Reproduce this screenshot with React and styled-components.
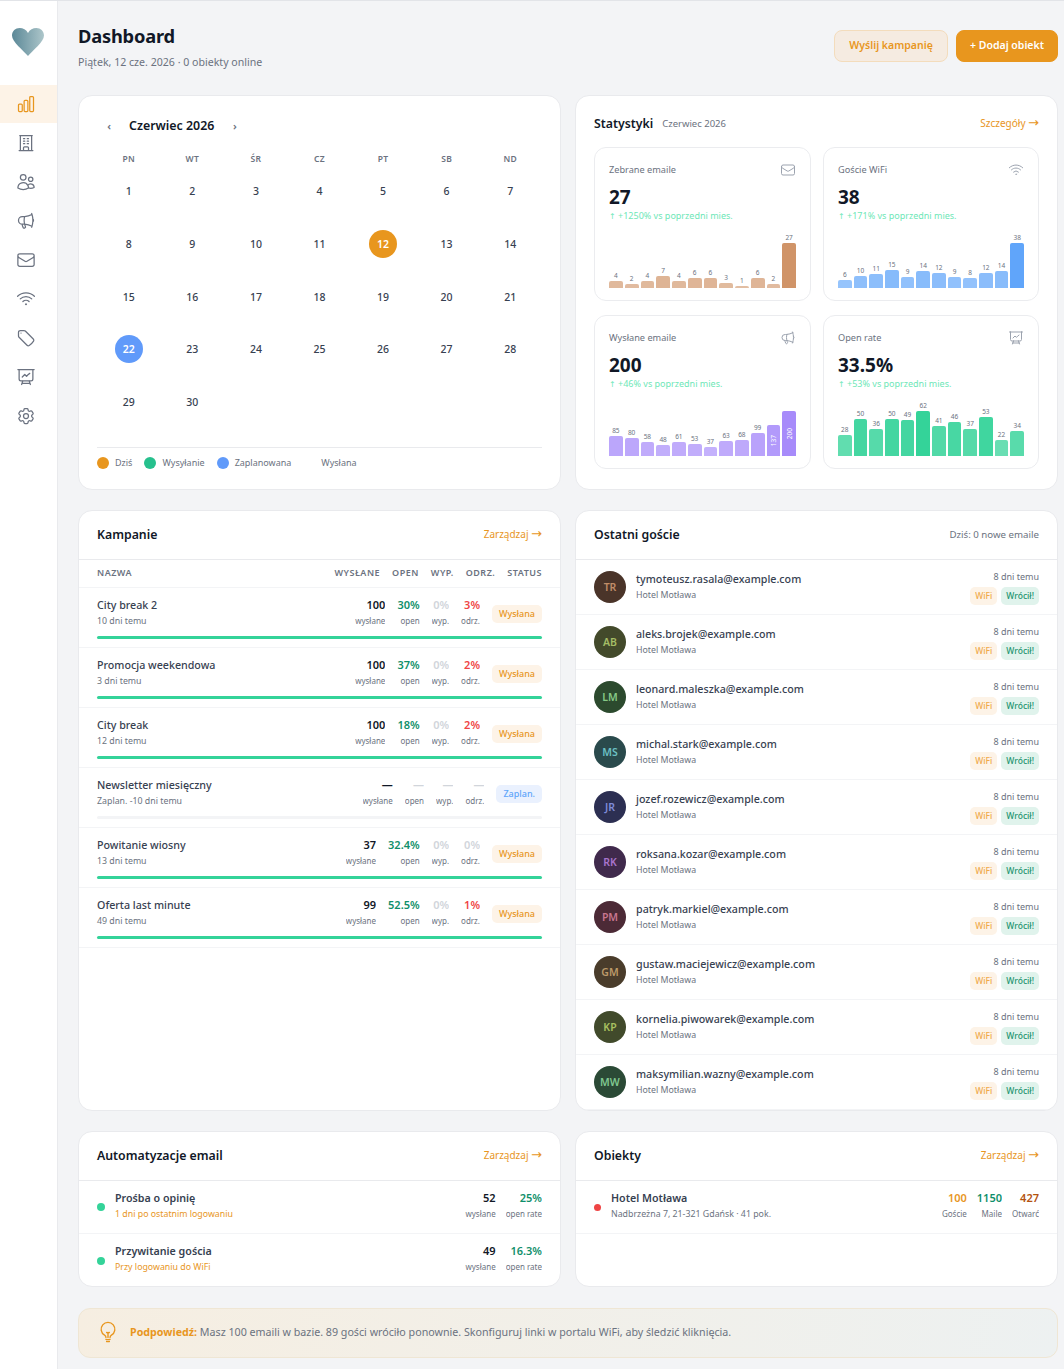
import React from "react";
import styled, { createGlobalStyle } from "styled-components";
import {
  HiOutlineChartBar,
  HiOutlineBuildingOffice,
  HiOutlineUsers,
  HiOutlineMegaphone,
  HiOutlineEnvelope,
  HiOutlineWifi,
  HiOutlineTag,
  HiOutlinePresentationChartLine,
  HiOutlineCog6Tooth,
  HiOutlineLightBulb,
} from "react-icons/hi2";

const ORANGE = "#e8961e";
const FONT = `"Noto Sans", "Open Sans", Arial, sans-serif`;

const GlobalStyle = createGlobalStyle`
  * { box-sizing: border-box; }
  html, body { margin: 0; padding: 0; }
  body {
    background: #f3f4f6;
    font-family: ${FONT};
    color: #111827;
  }
`;

const Page = styled.div`
  display: flex;
  width: 1064px;
  height: 1369px;
  overflow: hidden;
  border-top: 1px solid #e2e4e8;
`;

const Sidebar = styled.aside`
  width: 58px;
  flex-shrink: 0;
  background: #fff;
  border-right: 1px solid #e9eaed;
  padding-top: 26px;
`;

const Logo = styled.div`
  display: flex;
  padding-left: 11px;
  height: 58px;
`;

const NavItem = styled.div`
  height: 38px;
  margin-bottom: 1px;
  display: flex;
  align-items: center;
  padding-left: 16px;
  font-size: 20px;
  color: ${(p) => (p.$active ? ORANGE : "#6b7280")};
  background: ${(p) => (p.$active ? "#fdf3e7" : "transparent")};
`;

const Main = styled.main`
  flex: 1;
  padding: 0 6px 0 20px;
  min-width: 0;
`;

const TopBar = styled.header`
  display: flex;
  justify-content: space-between;
  align-items: flex-start;
  height: 94px;
  padding-top: 22px;
`;

const Title = styled.h1`
  margin: 0;
  font-size: 18.3px;
  line-height: 26px;
  font-weight: 700;
  letter-spacing: -0.2px;
`;

const Subtitle = styled.div`
  font-size: 10.6px;
  line-height: 14px;
  margin-top: 6px;
  color: #6b7280;
`;

const Actions = styled.div`
  display: flex;
  gap: 8px;
  padding-top: 7px;
`;

const Button = styled.button`
  height: 32px;
  width: ${(p) => p.$w}px;
  border-radius: 8px;
  font-family: ${FONT};
  font-size: 10.5px;
  font-weight: 600;
  padding: 0 0 2px;
  color: ${(p) => (p.$primary ? "#fff" : ORANGE)};
  background: ${(p) => (p.$primary ? ORANGE : "#f5ebe1")};
  border: 1px solid ${(p) => (p.$primary ? ORANGE : "#f3dcbc")};
`;

const Columns = styled.div`
  display: grid;
  grid-template-columns: 483px 483px;
  gap: 14px;
  margin-bottom: ${(p) => p.$mb || 20}px;
  height: ${(p) => p.$h}px;
`;

const Card = styled.section`
  background: #fff;
  border: 1px solid #e9eaed;
  border-radius: 14px;
  overflow: hidden;
  min-width: 0;
`;

const CalendarCard = styled(Card)`
  padding: 17px 18px 0;
`;

const CalHead = styled.div`
  display: flex;
  align-items: center;
  height: 24px;
  font-size: 12.4px;
  font-weight: 600;
  margin-bottom: 16px;
`;

const CalArrow = styled.span`
  font-size: 11px;
  color: #6b7280;
  width: ${(p) => p.$w}px;
  margin-right: ${(p) => p.$mr || 0}px;
  text-align: ${(p) => p.$align};
`;

const CalMonth = styled.span`
  width: 104px;
  white-space: nowrap;
`;

const CalGrid = styled.div`
  display: grid;
  grid-template-columns: repeat(7, 1fr);
  text-align: center;
`;

const DayName = styled.div`
  font-size: 8.5px;
  font-weight: 600;
  line-height: 12px;
  height: 11.7px;
  letter-spacing: 0.3px;
  color: #6b7280;
`;

const DayCell = styled.div`
  height: 52.75px;
  display: flex;
  justify-content: center;
  align-items: center;
  font-size: 10.5px;
  font-weight: 500;
  color: #374151;
`;

const DayCircle = styled.span`
  width: 28px;
  height: 28px;
  border-radius: 50%;
  display: flex;
  align-items: center;
  justify-content: center;
  font-weight: ${(p) => (p.$bg ? 600 : 500)};
  color: ${(p) => (p.$bg ? "#fff" : "inherit")};
  background: ${(p) => p.$bg || "transparent"};
`;

const Legend = styled.div`
  display: flex;
  align-items: center;
  gap: 12px;
  margin-top: 18.3px;
  padding-top: 9px;
  border-top: 1px solid #e9eaed;
`;

const LegendItem = styled.div`
  display: flex;
  align-items: center;
  gap: 6px;
  font-size: 9px;
  line-height: 12px;
  color: #6b7280;
`;

const LegendDot = styled.span`
  width: 12px;
  height: 12px;
  border-radius: 50%;
  background: ${(p) => p.$c};
`;

const StatsCard = styled(Card)`
  padding: 16px 18px 0;
`;

const StatsHead = styled.div`
  display: flex;
  align-items: center;
  height: 22px;
  margin-bottom: 13px;
`;

const CardTitle = styled.h2`
  margin: 0;
  font-size: 12.3px;
  font-weight: 600;
  white-space: nowrap;
`;

const Muted = styled.span`
  font-size: ${(p) => p.$size || 9.5}px;
  color: #6b7280;
  margin-left: ${(p) => (p.$right ? "auto" : `${p.$ml || 0}px`)};
  white-space: nowrap;
`;

const LinkText = styled.span`
  font-size: 10px;
  color: ${ORANGE};
  margin-left: auto;
  white-space: nowrap;
`;

const Arrow = styled.span`
  font-family: "DejaVu Sans", sans-serif;
  font-size: ${(p) => p.$size}px;
  line-height: 0;
`;

const StatGrid = styled.div`
  display: grid;
  grid-template-columns: 217px 216px;
  gap: 14px 12px;
`;

const StatBox = styled.div`
  height: 154px;
  border: 1px solid #ebecef;
  border-radius: 12px;
  padding: 14px 14px 12px;
  display: flex;
  flex-direction: column;
`;

const StatTop = styled.div`
  display: flex;
  justify-content: space-between;
  align-items: center;
  font-size: 9.2px;
  line-height: 14px;
  color: #6b7280;
  svg { font-size: 16px; color: #9ca3af; }
`;

const StatValue = styled.div`
  font-size: 19px;
  line-height: 24px;
  font-weight: 700;
  margin-top: 7px;
`;

const StatDelta = styled.div`
  font-size: 9px;
  line-height: 12px;
  margin-top: 1px;
  color: #6ee7b7;
  white-space: nowrap;
`;

const Bars = styled.div`
  margin-top: auto;
  display: flex;
  align-items: flex-end;
  gap: 2px;
`;

const BarCol = styled.div`
  flex: 1 1 0;
  min-width: 0;
  display: flex;
  flex-direction: column;
  align-items: center;
`;

const BarLabel = styled.span`
  font-size: 6.5px;
  line-height: 8px;
  margin-bottom: 1px;
  color: #6b7280;
`;

const Bar = styled.div`
  width: 100%;
  border-radius: 2px 2px 0 0;
  background: ${(p) => p.$c};
  display: flex;
  align-items: center;
  justify-content: center;
`;

const BarInner = styled.span`
  writing-mode: vertical-rl;
  transform: rotate(180deg);
  font-size: 6.5px;
  color: #fff;
`;

const PanelHead = styled.div`
  height: 49px;
  display: flex;
  align-items: center;
  padding: 0 18px 2px;
  border-bottom: 1px solid #e9eaed;
`;

const TableHead = styled.div`
  height: 28px;
  display: flex;
  align-items: center;
  padding: 0 18px 2px;
  font-size: 9px;
  font-weight: 600;
  letter-spacing: 0.5px;
  color: #6b7280;
  border-bottom: 1px solid #f3f4f6;
`;

const HeadCell = styled.span`
  margin-left: ${(p) => p.$ml || 0}px;
  margin-right: ${(p) => (p.$grow ? "auto" : 0)};
`;

const CampaignRow = styled.div`
  height: 60px;
  padding: 7px 18px 0;
  border-bottom: 1px solid #f3f4f6;
`;

const RowTop = styled.div`
  display: flex;
  align-items: center;
  height: 33px;
`;

const NameBlock = styled.div`
  flex: 1;
  min-width: 0;
`;

const GuestInfo = styled(NameBlock)`
  margin-top: -3px;
`;

const RowName = styled.div`
  font-size: 10.7px;
  line-height: 16px;
  font-weight: ${(p) => p.$weight || 500};
  color: #374151;
  white-space: nowrap;
`;

const RowSub = styled.div`
  font-size: 8.8px;
  line-height: 12px;
  margin-top: 2px;
  color: ${(p) => p.$c || "#6b7280"};
  white-space: nowrap;
`;

const Metric = styled.div`
  text-align: right;
  margin-left: ${(p) => p.$ml ?? 12}px;
  width: ${(p) => (p.$w ? `${p.$w}px` : "auto")};
  overflow: hidden;
`;

const MetricValue = styled.div`
  font-size: 11px;
  line-height: 16px;
  font-weight: 600;
  color: ${(p) => p.$c || "#111827"};
`;

const MetricLabel = styled.div`
  font-size: 8px;
  line-height: 12px;
  margin-top: 2px;
  color: #6b7280;
  white-space: nowrap;
`;

const Pill = styled.span`
  display: inline-flex;
  align-items: center;
  justify-content: center;
  height: 18px;
  padding: 0 ${(p) => (p.$small ? 5 : 7)}px;
  border-radius: 5px;
  font-size: ${(p) => (p.$small ? 8.5 : 9)}px;
  font-weight: 500;
  white-space: nowrap;
  color: ${(p) => p.$c};
  background: ${(p) => p.$bg};
  margin-left: ${(p) => p.$ml || 0}px;
  margin-top: ${(p) => (p.$small ? 0 : 4)}px;
`;

const Progress = styled.div`
  height: 3px;
  margin-top: 8px;
  border-radius: 2px;
  background: ${(p) => (p.$on ? "#34d399" : "#f3f4f6")};
`;

const GuestRow = styled.div`
  height: 55px;
  display: flex;
  align-items: center;
  padding: 0 18px;
  border-bottom: 1px solid #f3f4f6;
`;

const Avatar = styled.div`
  width: 32px;
  height: 32px;
  border-radius: 50%;
  flex-shrink: 0;
  display: flex;
  align-items: center;
  justify-content: center;
  margin-right: 10px;
  padding-bottom: 1px;
  font-size: 10.5px;
  font-weight: 600;
  background: ${(p) => p.$bg};
  color: ${(p) => p.$c};
`;

const GuestSide = styled.div`
  display: flex;
  flex-direction: column;
  align-items: flex-end;
  gap: 3px;
`;

const GuestTime = styled.div`
  font-size: 9px;
  line-height: 14px;
  color: #6b7280;
`;

const GuestPills = styled.div`
  display: flex;
  gap: 4px;
`;

const ListRow = styled.div`
  height: 53px;
  display: flex;
  align-items: center;
  padding: 0 18px 5px;
  border-bottom: ${(p) => (p.$last ? "none" : "1px solid #f3f4f6")};
`;

const StatusDot = styled.span`
  width: ${(p) => p.$s}px;
  height: ${(p) => p.$s}px;
  border-radius: 50%;
  flex-shrink: 0;
  margin: 5px 10px 0 0;
  background: ${(p) => p.$c};
`;

const Tip = styled.div`
  height: 50px;
  display: flex;
  align-items: center;
  padding: 0 18px 2px;
  gap: 11px;
  border: 1px solid #efe6d4;
  border-radius: 12px;
  background: linear-gradient(100deg, #f6eee1, #edf1f1);
  font-size: 10.7px;
  color: #6b7280;
  white-space: nowrap;
  svg { font-size: 22px; color: ${ORANGE}; flex-shrink: 0; }
  b { color: ${ORANGE}; font-weight: 700; }
`;

const navIcons = [
  HiOutlineChartBar,
  HiOutlineBuildingOffice,
  HiOutlineUsers,
  HiOutlineMegaphone,
  HiOutlineEnvelope,
  HiOutlineWifi,
  HiOutlineTag,
  HiOutlinePresentationChartLine,
  HiOutlineCog6Tooth,
];

const dayNames = ["PN", "WT", "ŚR", "CZ", "PT", "SB", "ND"];
const days = Array.from({ length: 30 }, (_, i) => i + 1);

const legend = [
  ["Dziś", ORANGE],
  ["Wysyłanie", "#26c08d"],
  ["Zaplanowana", "#609afa"],
  ["Wysłana", "#fff"],
];

const stats = [
  { title: "Zebrane emaile", value: "27", delta: "+1250%", Icon: HiOutlineEnvelope, color: "208,148,104", bars: [4, 2, 4, 7, 4, 6, 6, 3, 1, 6, 2, 27] },
  { title: "Goście WiFi", value: "38", delta: "+171%", Icon: HiOutlineWifi, color: "96,165,250", bars: [6, 10, 11, 15, 9, 14, 12, 9, 8, 12, 14, 38] },
  { title: "Wysłane emaile", value: "200", delta: "+46%", Icon: HiOutlineMegaphone, color: "167,139,250", bars: [85, 80, 58, 48, 61, 53, 37, 63, 68, 99, 137, 200] },
  { title: "Open rate", value: "33.5%", delta: "+53%", Icon: HiOutlinePresentationChartLine, color: "52,211,153", bars: [28, 50, 36, 50, 49, 62, 41, 46, 37, 53, 22, 34] },
];

const GREEN = "#0f8f6a";
const RED = "#ef4444";
const ZERO = "#d1d5db";

const campaigns = [
  { name: "City break 2", sub: "10 dni temu", sent: "100", open: "30%", wyp: "0%", odrz: "3%" },
  { name: "Promocja weekendowa", sub: "3 dni temu", sent: "100", open: "37%", wyp: "0%", odrz: "2%" },
  { name: "City break", sub: "12 dni temu", sent: "100", open: "18%", wyp: "0%", odrz: "2%" },
  { name: "Newsletter miesięczny", sub: "Zaplan. -10 dni temu", sent: "—", open: "—", wyp: "—", odrz: "—", planned: true },
  { name: "Powitanie wiosny", sub: "13 dni temu", sent: "37", open: "32.4%", wyp: "0%", odrz: "0%" },
  { name: "Oferta last minute", sub: "49 dni temu", sent: "99", open: "52.5%", wyp: "0%", odrz: "1%" },
];

const guests = [
  ["tymoteusz.rasala", "TR", "#4a3429", "#c08d68"],
  ["aleks.brojek", "AB", "#434a2b", "#a5bd66"],
  ["leonard.maleszka", "LM", "#2c4a2e", "#86c986"],
  ["michal.stark", "MS", "#2a4a4c", "#6cc0c4"],
  ["jozef.rozewicz", "JR", "#2c2f52", "#7f8bd8"],
  ["roksana.kozar", "RK", "#402a4c", "#a874cc"],
  ["patryk.markiel", "PM", "#4c2a36", "#c8768f"],
  ["gustaw.maciejewicz", "GM", "#4a3c2b", "#bd9a6a"],
  ["kornelia.piwowarek", "KP", "#414a2b", "#a8c060"],
  ["maksymilian.wazny", "MW", "#2b4a36", "#80c890"],
];

const automations = [
  { name: "Prośba o opinię", sub: "1 dni po ostatnim logowaniu", sent: "52", rate: "25%" },
  { name: "Przywitanie gościa", sub: "Przy logowaniu do WiFi", sent: "49", rate: "16.3%" },
];

const HeartLogo = () => (
  <svg width="34" height="30" viewBox="0 0 34 30">
    <defs>
      <linearGradient id="heart" x1="0" y1="0" x2="1" y2="0">
        <stop offset="0" stopColor="#5b8897" />
        <stop offset="1" stopColor="#adc6ca" />
      </linearGradient>
    </defs>
    <path
      d="M17 29C12 23 1 15 1 8.500 1 4 4.500 1 8.600 1 12 1 15.400 2.800 17 6c1.600-3.200 5-5 8.400-5C29.500 1 33 4 33 8.500 33 15 22 23 17 29z"
      fill="url(#heart)"
    />
  </svg>
);

const StatCard = ({ stat }) => {
  const max = Math.max(...stat.bars);
  return (
    <StatBox>
      <StatTop>
        {stat.title}
        <stat.Icon />
      </StatTop>
      <StatValue>{stat.value}</StatValue>
      <StatDelta><Arrow $size={8}>↑</Arrow> {stat.delta} vs poprzedni mies.</StatDelta>
      <Bars>
        {stat.bars.map((v, i) => {
          const inside = v >= 100;
          const alpha = 0.6 + (0.4 * v) / max;
          return (
            <BarCol key={i}>
              {!inside && <BarLabel>{v}</BarLabel>}
              <Bar
                $c={`rgba(${stat.color},${alpha.toFixed(2)})`}
                style={{ height: Math.ceil((v / max) * 45) }}
              >
                {inside && <BarInner>{v}</BarInner>}
              </Bar>
            </BarCol>
          );
        })}
      </Bars>
    </StatBox>
  );
};

const App = () => {
  return (
    <Page>
      <GlobalStyle />
      <Sidebar>
        <Logo>
          <HeartLogo />
        </Logo>
        {navIcons.map((Icon, i) => (
          <NavItem key={i} $active={i === 0}>
            <Icon />
          </NavItem>
        ))}
      </Sidebar>
      <Main>
        <TopBar>
          <div>
            <Title>Dashboard</Title>
            <Subtitle>Piątek, 12 cze. 2026 · 0 obiekty online</Subtitle>
          </div>
          <Actions>
            <Button $w={114}>Wyślij kampanię</Button>
            <Button $w={102} $primary>+ Dodaj obiekt</Button>
          </Actions>
        </TopBar>

        <Columns $h={395}>
          <CalendarCard>
            <CalHead>
              <CalArrow $w={14} $mr={18} $align="right">‹</CalArrow>
              <CalMonth>Czerwiec 2026</CalMonth>
              <CalArrow $w={14} $align="left">›</CalArrow>
            </CalHead>
            <CalGrid>
              {dayNames.map((d) => (
                <DayName key={d}>{d}</DayName>
              ))}
              {days.map((d) => (
                <DayCell key={d}>
                  <DayCircle $bg={d === 12 ? ORANGE : d === 22 ? "#609afa" : null}>{d}</DayCircle>
                </DayCell>
              ))}
            </CalGrid>
            <Legend>
              {legend.map(([label, c]) => (
                <LegendItem key={label}>
                  <LegendDot $c={c} />
                  {label}
                </LegendItem>
              ))}
            </Legend>
          </CalendarCard>

          <StatsCard>
            <StatsHead>
              <CardTitle>Statystyki</CardTitle>
              <Muted $ml={9}>Czerwiec 2026</Muted>
              <LinkText>Szczegóły <Arrow $size={13}>→</Arrow></LinkText>
            </StatsHead>
            <StatGrid>
              {stats.map((s) => (
                <StatCard key={s.title} stat={s} />
              ))}
            </StatGrid>
          </StatsCard>
        </Columns>

        <Columns $h={601}>
          <Card>
            <PanelHead>
              <CardTitle>Kampanie</CardTitle>
              <LinkText>Zarządzaj <Arrow $size={13}>→</Arrow></LinkText>
            </PanelHead>
            <TableHead>
              <HeadCell $grow>NAZWA</HeadCell>
              <HeadCell>WYSŁANE</HeadCell>
              <HeadCell $ml={12}>OPEN</HeadCell>
              <HeadCell $ml={12}>WYP.</HeadCell>
              <HeadCell $ml={12}>ODRZ.</HeadCell>
              <HeadCell $ml={12}>STATUS</HeadCell>
            </TableHead>
            {campaigns.map((c) => (
              <CampaignRow key={c.name}>
                <RowTop>
                  <NameBlock>
                    <RowName>{c.name}</RowName>
                    <RowSub>{c.sub}</RowSub>
                  </NameBlock>
                  <Metric>
                    <MetricValue>{c.sent}</MetricValue>
                    <MetricLabel>wysłane</MetricLabel>
                  </Metric>
                  <Metric>
                    <MetricValue $c={c.planned ? ZERO : GREEN}>{c.open}</MetricValue>
                    <MetricLabel>open</MetricLabel>
                  </Metric>
                  <Metric>
                    <MetricValue $c={ZERO}>{c.wyp}</MetricValue>
                    <MetricLabel>wyp.</MetricLabel>
                  </Metric>
                  <Metric>
                    <MetricValue $c={c.planned || c.odrz === "0%" ? ZERO : RED}>{c.odrz}</MetricValue>
                    <MetricLabel>odrz.</MetricLabel>
                  </Metric>
                  {c.planned ? (
                    <Pill $ml={12} $c="#60a5fa" $bg="#eaf1fe">Zaplan.</Pill>
                  ) : (
                    <Pill $ml={12} $c={ORANGE} $bg="#fdf3e7">Wysłana</Pill>
                  )}
                </RowTop>
                <Progress $on={!c.planned} />
              </CampaignRow>
            ))}
          </Card>

          <Card>
            <PanelHead>
              <CardTitle>Ostatni goście</CardTitle>
              <Muted $right $size={9.7}>Dziś: 0 nowe emaile</Muted>
            </PanelHead>
            {guests.map(([user, initials, bg, c]) => (
              <GuestRow key={user}>
                <Avatar $bg={bg} $c={c}>{initials}</Avatar>
                <GuestInfo>
                  <RowName>{user}@example.com</RowName>
                  <RowSub>Hotel Motława</RowSub>
                </GuestInfo>
                <GuestSide>
                  <GuestTime>8 dni temu</GuestTime>
                  <GuestPills>
                    <Pill $small $c="#f0a94a" $bg="#fdf3e7">WiFi</Pill>
                    <Pill $small $c="#22946e" $bg="#e0f3ec">Wrócił!</Pill>
                  </GuestPills>
                </GuestSide>
              </GuestRow>
            ))}
          </Card>
        </Columns>

        <Columns $h={156} $mb={21}>
          <Card>
            <PanelHead>
              <CardTitle>Automatyzacje email</CardTitle>
              <LinkText>Zarządzaj <Arrow $size={13}>→</Arrow></LinkText>
            </PanelHead>
            {automations.map((a, i) => (
              <ListRow key={a.name} $last={i === automations.length - 1}>
                <StatusDot $s={8} $c="#34d399" />
                <NameBlock>
                  <RowName $weight={600}>{a.name}</RowName>
                  <RowSub $c={ORANGE}>{a.sub}</RowSub>
                </NameBlock>
                <Metric>
                  <MetricValue>{a.sent}</MetricValue>
                  <MetricLabel>wysłane</MetricLabel>
                </Metric>
                <Metric $ml={10}>
                  <MetricValue $c={GREEN}>{a.rate}</MetricValue>
                  <MetricLabel>open rate</MetricLabel>
                </Metric>
              </ListRow>
            ))}
          </Card>

          <Card>
            <PanelHead>
              <CardTitle>Obiekty</CardTitle>
              <LinkText>Zarządzaj <Arrow $size={13}>→</Arrow></LinkText>
            </PanelHead>
            <ListRow>
              <StatusDot $s={7} $c={RED} />
              <NameBlock>
                <RowName $weight={600}>Hotel Motława</RowName>
                <RowSub>Nadbrzeżna 7, 21-321 Gdańsk · 41 pok.</RowSub>
              </NameBlock>
              <Metric>
                <MetricValue $c={ORANGE}>100</MetricValue>
                <MetricLabel>Goście</MetricLabel>
              </Metric>
              <Metric $ml={10}>
                <MetricValue $c={GREEN}>1150</MetricValue>
                <MetricLabel>Maile</MetricLabel>
              </Metric>
              <Metric $w={27} $ml={10}>
                <MetricValue $c="#b4530f">427</MetricValue>
                <MetricLabel>Otwarć</MetricLabel>
              </Metric>
            </ListRow>
          </Card>
        </Columns>

        <Tip>
          <HiOutlineLightBulb />
          <span>
            <b>Podpowiedź:</b> Masz 100 emaili w bazie. 89 gości wróciło ponownie. Skonfiguruj linki w portalu WiFi, aby śledzić kliknięcia.
          </span>
        </Tip>
      </Main>
    </Page>
  );
};

export default App;
